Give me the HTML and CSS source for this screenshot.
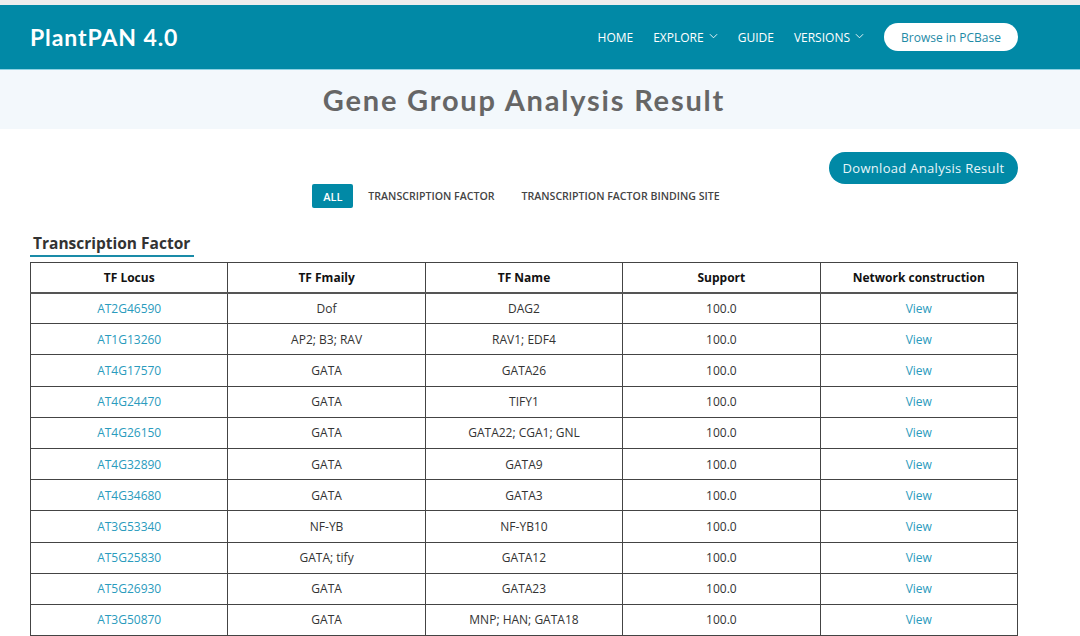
FILE: index.html
```html
<!DOCTYPE html>
<html>
<head>
<meta charset="utf-8">
<link rel="stylesheet" href="styles.css">
</head>
<body>
<div class="topstrip"></div>
<header class="navbar">
  <div class="brand">PlantPAN 4.0</div>
  <nav class="menu">
    <a class="item">HOME</a>
    <a class="item">EXPLORE <svg class="chev" viewBox="0 0 10 6" width="9" height="6"><path d="M1 1l4 4 4-4" fill="none" stroke="#fff" stroke-width="1"/></svg></a>
    <a class="item">GUIDE</a>
    <a class="item">VERSIONS <svg class="chev" viewBox="0 0 10 6" width="9" height="6"><path d="M1 1l4 4 4-4" fill="none" stroke="#fff" stroke-width="1"/></svg></a>
    <a class="pcbase">Browse in PCBase</a>
  </nav>
</header>
<section class="titleband">
  <h1>Gene Group Analysis Result</h1>
</section>
<main class="content">
  <div class="dlrow"><a class="download">Download Analysis Result</a></div>
  <div class="tabs">
    <span class="tab active">ALL</span>
    <span class="tab">TRANSCRIPTION FACTOR</span>
    <span class="tab">TRANSCRIPTION FACTOR BINDING SITE</span>
  </div>
  <h2 class="section">Transcription Factor</h2>
  <table class="grid">
    <thead>
      <tr><th>TF Locus</th><th>TF Fmaily</th><th>TF Name</th><th>Support</th><th>Network construction</th></tr>
    </thead>
    <tbody>
      <tr><td><a>AT2G46590</a></td><td>Dof</td><td>DAG2</td><td>100.0</td><td><a>View</a></td></tr>
      <tr><td><a>AT1G13260</a></td><td>AP2; B3; RAV</td><td>RAV1; EDF4</td><td>100.0</td><td><a>View</a></td></tr>
      <tr><td><a>AT4G17570</a></td><td>GATA</td><td>GATA26</td><td>100.0</td><td><a>View</a></td></tr>
      <tr><td><a>AT4G24470</a></td><td>GATA</td><td>TIFY1</td><td>100.0</td><td><a>View</a></td></tr>
      <tr><td><a>AT4G26150</a></td><td>GATA</td><td>GATA22; CGA1; GNL</td><td>100.0</td><td><a>View</a></td></tr>
      <tr><td><a>AT4G32890</a></td><td>GATA</td><td>GATA9</td><td>100.0</td><td><a>View</a></td></tr>
      <tr><td><a>AT4G34680</a></td><td>GATA</td><td>GATA3</td><td>100.0</td><td><a>View</a></td></tr>
      <tr><td><a>AT3G53340</a></td><td>NF-YB</td><td>NF-YB10</td><td>100.0</td><td><a>View</a></td></tr>
      <tr><td><a>AT5G25830</a></td><td>GATA; tify</td><td>GATA12</td><td>100.0</td><td><a>View</a></td></tr>
      <tr><td><a>AT5G26930</a></td><td>GATA</td><td>GATA23</td><td>100.0</td><td><a>View</a></td></tr>
      <tr><td><a>AT3G50870</a></td><td>GATA</td><td>MNP; HAN; GATA18</td><td>100.0</td><td><a>View</a></td></tr>
    </tbody>
  </table>
</main>
</body>
</html>
```

FILE: styles.css
```css
* { box-sizing: border-box; }
html, body { margin: 0; padding: 0; background: #fff; }
body { font-family: "Open Sans", "Noto Sans", sans-serif; color: #333; }

.topstrip { height: 5px; background: #ededed; }

.navbar {
  height: 65px;
  background: #0189a6;
  display: flex;
  align-items: center;
  justify-content: space-between;
  padding: 0 62px 0 30px;
  border-bottom: 1px solid #8ed2e2;
}
.brand {
  font-family: "Lato", "Noto Sans", sans-serif;
  font-weight: 700;
  font-size: 23px;
  color: #fff;
  letter-spacing: 0.9px;
  margin-top: -1px;
}
.menu { display: flex; align-items: center; }
.item {
  color: #fff;
  font-size: 12px;
  margin-right: 20px;
  display: flex;
  align-items: center;
  gap: 5px;
}
.chev { margin-top: -2px; }
.pcbase {
  background: #fff;
  color: #1f8aa6;
  font-size: 12px;
  height: 28px;
  width: 134px;
  border-radius: 14px;
  display: flex;
  align-items: center;
  justify-content: center;
}

.titleband {
  height: 59px;
  background: #f3f8fc;
  display: flex;
  align-items: center;
  padding: 0 62px 0 30px;
}
.titleband h1 {
  flex: 1;
  text-align: center;
  margin: 0;
  font-family: "Lato", "Noto Sans", sans-serif;
  font-weight: 700;
  font-size: 29px;
  letter-spacing: 1.8px;
  color: #666;
}

.content { padding: 0 62px 0 30px; }
.dlrow { display: flex; justify-content: flex-end; padding-top: 23px; }
.download {
  background: #0189a6;
  color: #e8f6fa;
  font-size: 13px;
  letter-spacing: 0.3px;
  height: 32px;
  width: 189px;
  border-radius: 16px;
  display: flex;
  align-items: center;
  justify-content: center;
}
.tabs {
  display: flex;
  justify-content: center;
  align-items: center;
  margin-top: 0;
  margin-left: -16px;
  gap: 15px;
}
.tab {
  font-size: 10.6px;
  font-weight: 600;
  color: #444;
}
.tab:nth-child(3) { margin-left: 12px; }
.tab.active {
  background: #0189a6;
  color: #fff;
  width: 41px;
  height: 24px;
  border-radius: 2px;
  display: flex;
  align-items: center;
  justify-content: center;
  font-size: 11px;
}

.section {
  display: inline-block;
  margin: 24px 0 5px 0;
  padding: 0 4px 1px 3px;
  font-size: 15.5px;
  font-weight: 700;
  color: #333;
  border-bottom: 2px solid #1a8ba8;
  line-height: 22px;
}

.grid {
  width: 988px;
  border-collapse: collapse;
  table-layout: fixed;
  font-size: 12px;
}
.grid th, .grid td {
  border: 1px solid #444;
  text-align: center;
  padding: 0;
}
.grid th { height: 30px; color: #111; font-weight: 700; border-bottom: 2px solid #555; }
.grid td { height: 31.2px; color: #333; border-top-color: #666; }
.grid a { color: #2a9bbd; }
```
